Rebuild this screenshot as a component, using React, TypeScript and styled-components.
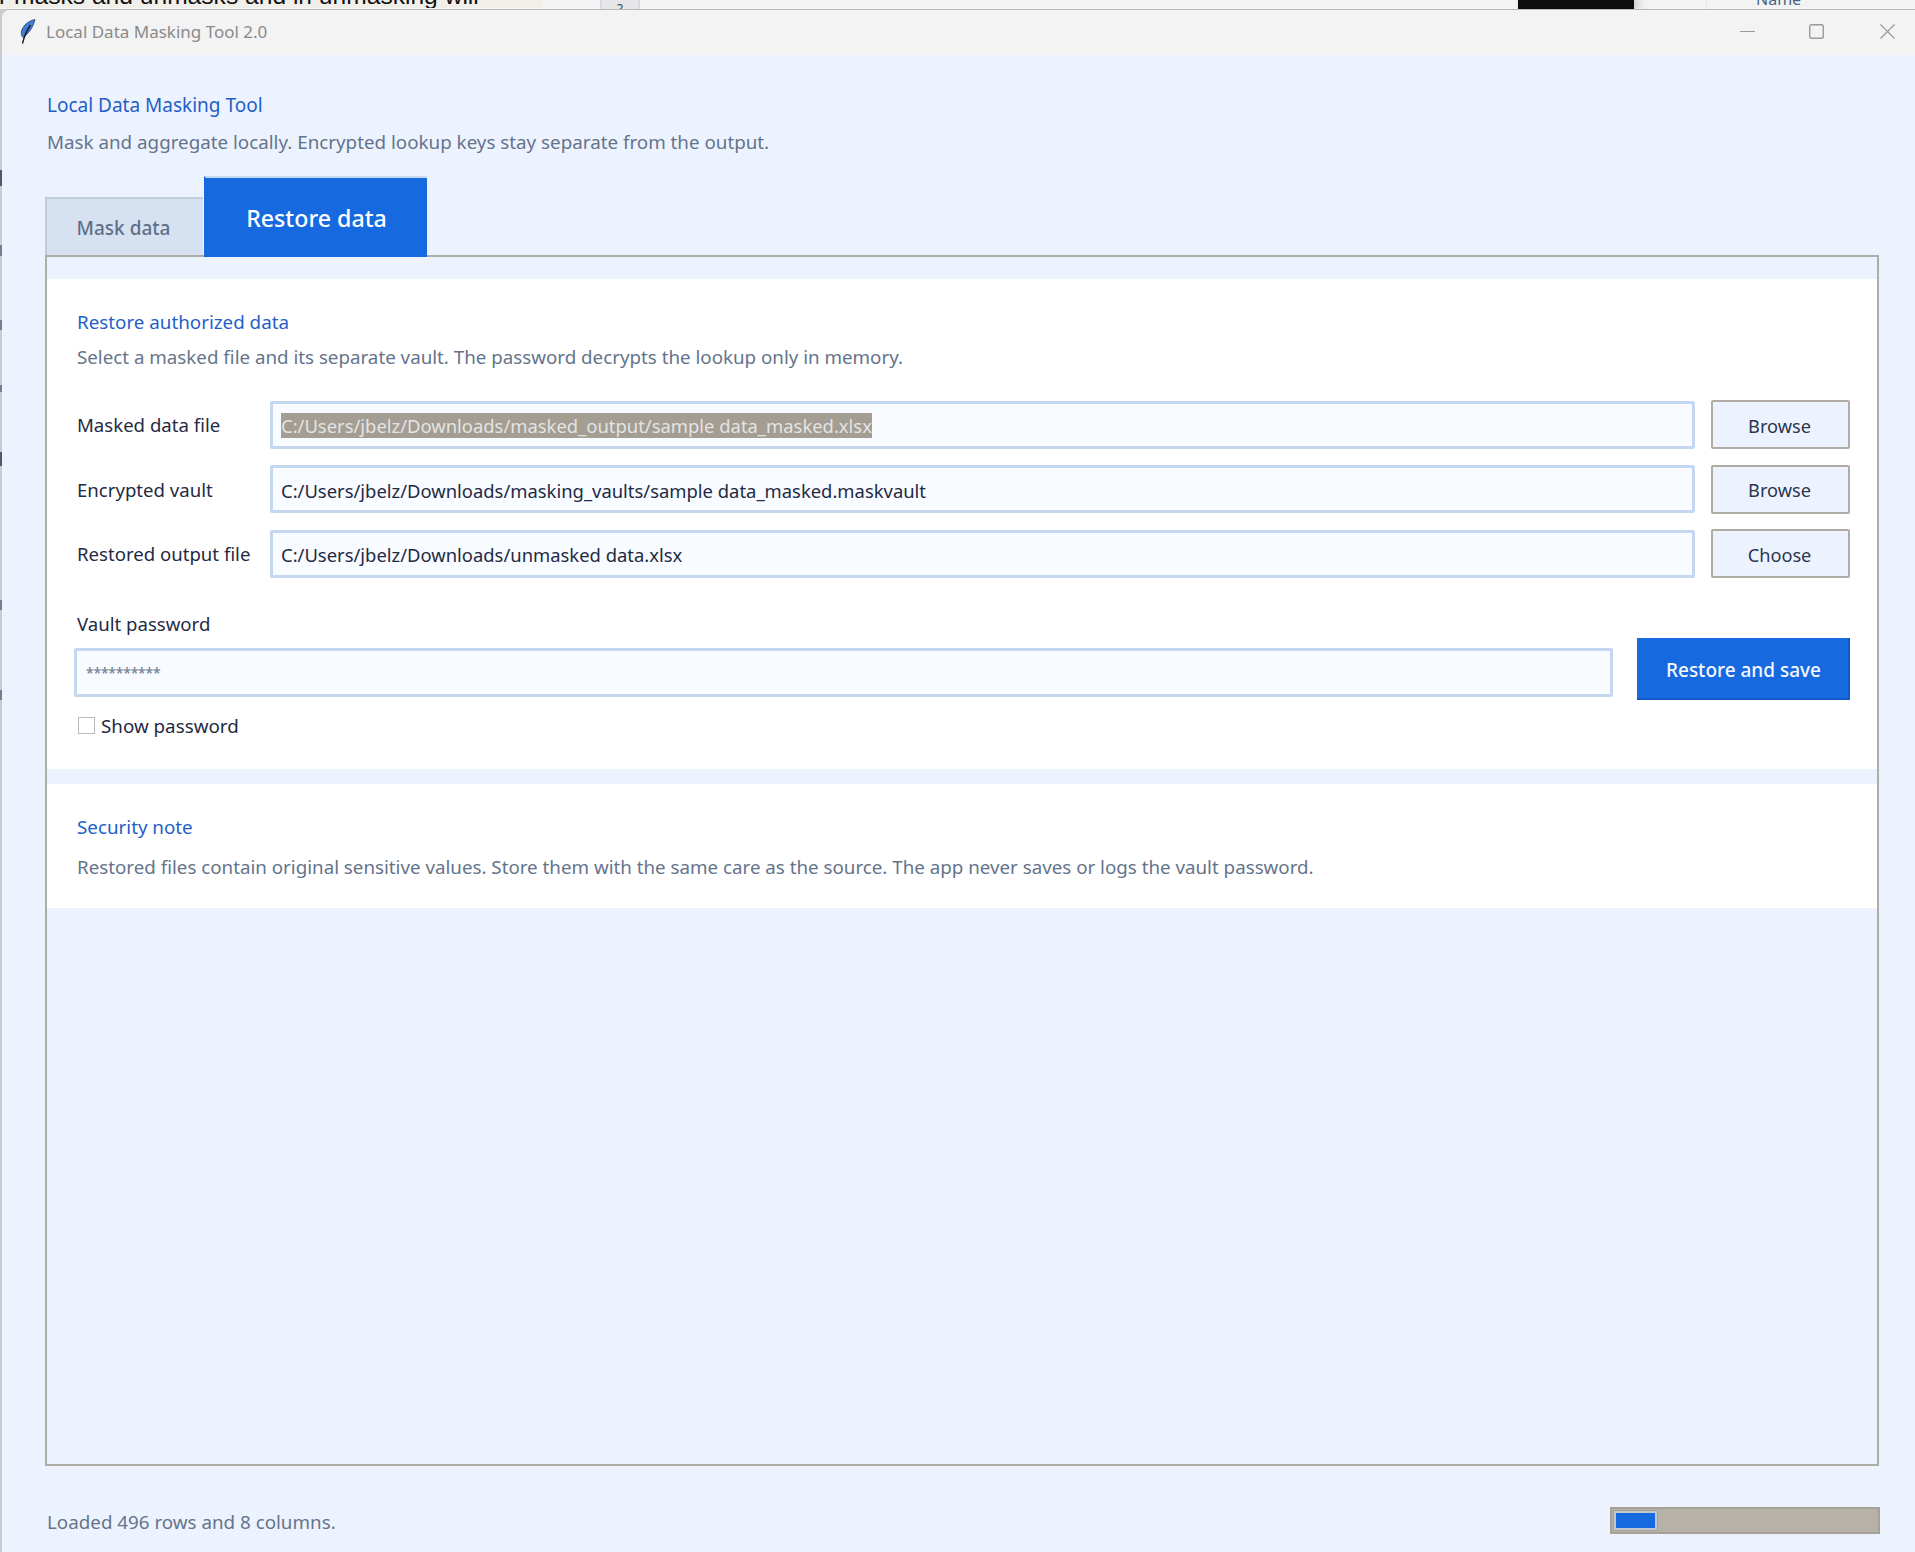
import React from 'react';
import styled, { createGlobalStyle } from 'styled-components';

const GlobalStyle = createGlobalStyle`
  html, body {
    margin: 0;
    padding: 0;
    background: #c9cbcf;
  }
  * {
    box-sizing: border-box;
  }
  body {
    font-family: 'Noto Sans', 'Open Sans', sans-serif;
  }
`;

const Page = styled.div`
  width: 1915px;
  height: 1552px;
  overflow: hidden;
  background: linear-gradient(
    to bottom,
    #c9cbcf 0 170px,
    #555a62 170px 186px,
    #c9cbcf 186px 245px,
    #7a7f86 245px 256px,
    #c9cbcf 256px 320px,
    #7a7f86 320px 330px,
    #c9cbcf 330px 385px,
    #7a7f86 385px 392px,
    #c9cbcf 392px 452px,
    #555a62 452px 466px,
    #c9cbcf 466px 600px,
    #7a7f86 600px 610px,
    #c9cbcf 610px 690px,
    #7a7f86 690px 700px,
    #c9cbcf 700px
  );
`;

const Backdrop = styled.div`
  display: flex;
  height: 9px;
  overflow: hidden;
  background: #f3f3f3;
`;

const BackdropDoc = styled.div`
  width: 543px;
  height: 24px;
  margin-top: -16px;
  background: #f0efea;
  color: #111;
  font-family: 'Liberation Sans', sans-serif;
  font-size: 24.6px;
  line-height: 24px;
  white-space: nowrap;
  text-indent: -1px;
  overflow: hidden;
`;

const BackdropGap = styled.div<{ $width: number }>`
  width: ${(p) => p.$width}px;
`;

const BackdropCell = styled.div`
  width: 40px;
  padding-top: 2px;
  background: #e6e6e8;
  border-left: 2px solid #d8d8e2;
  border-right: 2px solid #d8d8e2;
  color: #555;
  font-size: 14px;
  line-height: 14px;
  text-align: center;
`;

const BackdropBlack = styled.div`
  width: 116px;
  background: #0c0c0c;
  box-shadow: 4px 0 10px rgba(0, 0, 0, 0.25);
`;

const BackdropName = styled.div`
  height: 18px;
  margin-top: -9px;
  margin-left: 72px;
  padding-left: 49px;
  border-left: 1px solid #e6e6e6;
  color: #4a6488;
  font-size: 16px;
  line-height: 16px;
`;

const Window = styled.div`
  display: flex;
  flex-direction: column;
  height: 1543px;
  margin-left: 2px;
  background: #edf3fe;
  border-top: 1px solid #b9b9b9;
  border-top-left-radius: 8px;
  overflow: hidden;
`;

const TitleBar = styled.div`
  display: flex;
  align-items: center;
  flex: none;
  height: 45px;
  padding: 0 0 2px 15px;
  background: #f3f3f3;
  color: #8a8a8a;
  font-size: 17px;
`;

const WindowTitle = styled.span`
  margin-left: 9px;
`;

const WindowControls = styled.div`
  display: flex;
  align-items: center;
  gap: 54px;
  margin-left: auto;
  padding-right: 20px;
`;

const CloseSlot = styled.span`
  display: flex;
  margin-left: 2px;
`;

const Main = styled.div`
  display: flex;
  flex-direction: column;
  flex: 1;
  padding: 0 36px 0 43px;
`;

const AppTitle = styled.div`
  margin: 38px 0 0 2px;
  color: #1f5fc8;
  font-size: 19px;
  line-height: 24px;
`;

const AppSubtitle = styled.div`
  margin: 13px 0 0 2px;
  color: #64748b;
  font-size: 18.8px;
  line-height: 24px;
`;

const TabStrip = styled.div`
  display: flex;
  align-items: flex-end;
  gap: 1px;
  height: 81px;
  margin-top: 22px;
  position: relative;
  z-index: 1;
`;

const Tab = styled.div<{ $active?: boolean }>`
  display: flex;
  align-items: center;
  justify-content: center;
  width: ${(p) => (p.$active ? '223px' : '158px')};
  height: ${(p) => (p.$active ? '81px' : '58px')};
  margin-bottom: ${(p) => (p.$active ? '0' : '2px')};
  padding: ${(p) => (p.$active ? '0' : '2px 3px 0 0')};
  background: ${(p) => (p.$active ? '#1769e0' : '#d6e2f1')};
  border-top: 2px solid ${(p) => (p.$active ? '#c7d9f3' : '#c2cdda')};
  border-left: 2px solid ${(p) => (p.$active ? '#1769e0' : '#c2cdda')};
  color: ${(p) => (p.$active ? '#ffffff' : '#5f6f86')};
  font-size: ${(p) => (p.$active ? '23.2px' : '19px')};
  font-weight: 500;
`;

const Frame = styled.div`
  display: flex;
  flex-direction: column;
  gap: 15px;
  height: 1211px;
  margin-top: -2px;
  padding-top: 22px;
  border: 2px solid #aeada8;
`;

const Card = styled.section<{ $bottom: number }>`
  padding: 31px 27px ${(p) => p.$bottom}px 30px;
  background: #ffffff;
`;

const CardTitle = styled.div`
  color: #1f5fc8;
  font-size: 18.8px;
  line-height: 24px;
`;

const CardText = styled.div<{ $top: number }>`
  margin-top: ${(p) => p.$top}px;
  color: #64748b;
  font-size: 18.75px;
  line-height: 24px;
`;

const FileRows = styled.div`
  display: flex;
  flex-direction: column;
  gap: 15.5px;
  margin-top: 31px;
`;

const FileRow = styled.div`
  display: grid;
  grid-template-columns: 177px 1fr 139px;
  column-gap: 16px;
  align-items: center;
  height: 49px;
`;

const FieldLabel = styled.div<{ $top?: number }>`
  margin-top: ${(p) => p.$top ?? 0}px;
  padding-top: 1px;
  color: #1f2a44;
  font-size: 18.6px;
  line-height: 24px;
`;

const Field = styled.div`
  display: flex;
  align-items: center;
  height: 48px;
  padding: 2px 8px 0;
  background: #f8fbff;
  border: 3px solid #c5d6f0;
  border-radius: 2px;
  color: #1f2a44;
  font-size: 18.42px;
  white-space: nowrap;
`;

const Selected = styled.span`
  background: #a39d93;
  color: #e4e4e2;
  line-height: 25px;
`;

const Browse = styled.div`
  display: flex;
  align-items: center;
  justify-content: center;
  height: 49px;
  padding: 2px 2px 0 0;
  background: #edf3fe;
  border: 2px solid #b0aca3;
  border-radius: 2px;
  color: #2b3550;
  font-size: 18.2px;
`;

const PasswordRow = styled.div`
  display: flex;
  align-items: flex-start;
  gap: 24px;
  margin: 2px 0 0 -3px;
`;

const PasswordField = styled(Field)`
  flex: 1;
  height: 49px;
  margin-top: 10px;
  padding: 0 8px 0 9px;
  color: #7a869a;
  font-size: 14px;
  font-weight: 600;
  letter-spacing: -0.2px;
`;

const PrimaryButton = styled.div`
  display: flex;
  align-items: center;
  justify-content: center;
  width: 213px;
  height: 62px;
  padding: 4px 0 0 2px;
  background: #1769e0;
  border-right: 2px solid #1259c7;
  border-bottom: 2px solid #1259c7;
  color: #f4f8ff;
  font-size: 19px;
  font-weight: 500;
`;

const CheckRow = styled.div`
  display: flex;
  align-items: center;
  gap: 6px;
  height: 24px;
  margin: 14px 0 0 1px;
  color: #1f2a44;
  font-size: 18.8px;
`;

const CheckBox = styled.span`
  width: 17px;
  height: 17px;
  margin-top: -2px;
  background: #fff;
  border: 1px solid #b9b9b9;
`;

const Footer = styled.div`
  display: flex;
  align-items: center;
  justify-content: space-between;
  height: 27px;
  margin: 41px -1px 0 2px;
  color: #64748b;
  font-size: 18.8px;
`;

const StatusText = styled.span`
  padding-top: 2px;
`;

const Progress = styled.div`
  width: 270px;
  height: 27px;
  padding: 2px;
  background: #b7b2a7;
  border: 2px solid #a7a298;
`;

const ProgressFill = styled.div`
  width: 43px;
  height: 19px;
  background: #1769e0;
  border: 2px solid #c2c8d2;
  outline: 1px solid #a7a298;
`;

const Feather = () => (
  <svg width="20" height="26" viewBox="0 0 20 26" aria-hidden="true">
    <path
      d="M18 0.5 C13 1.5 6.5 5 4.5 12 C4 15 4.5 17 6 18.5 C11 15 16 9 18 0.5 Z"
      fill="#3f7fd6"
      stroke="#1d3f78"
      strokeWidth="0.8"
    />
    <path d="M13.5 6 C10 11 7.5 16 5.5 24.5" fill="none" stroke="#1a1a1a" strokeWidth="1.4" />
  </svg>
);

const MinimizeIcon = () => (
  <svg width="15" height="15" viewBox="0 0 15 15" aria-hidden="true">
    <path d="M0 7.5 H15" stroke="#9a9a9a" strokeWidth="1" />
  </svg>
);

const MaximizeIcon = () => (
  <svg width="15" height="15" viewBox="0 0 15 15" aria-hidden="true">
    <rect x="0.7" y="0.7" width="13.6" height="13.6" rx="2" fill="none" stroke="#9a9a9a" strokeWidth="1.4" />
  </svg>
);

const CloseIcon = () => (
  <svg width="15" height="15" viewBox="0 0 15 15" aria-hidden="true">
    <path d="M0.5 0.5 L14.5 14.5 M14.5 0.5 L0.5 14.5" stroke="#9a9a9a" strokeWidth="1.2" />
  </svg>
);

const fileRows = [
  { label: 'Masked data file', path: 'C:/Users/jbelz/Downloads/masked_output/sample data_masked.xlsx', action: 'Browse', selected: true },
  { label: 'Encrypted vault', path: 'C:/Users/jbelz/Downloads/masking_vaults/sample data_masked.maskvault', action: 'Browse' },
  { label: 'Restored output file', path: 'C:/Users/jbelz/Downloads/unmasked data.xlsx', action: 'Choose' },
];

export default function App() {
  return (
    <Page>
      <GlobalStyle />
      <Backdrop>
        <BackdropDoc>r masks and unmasks and in unmasking will</BackdropDoc>
        <BackdropGap $width={57} />
        <BackdropCell>?</BackdropCell>
        <BackdropGap $width={878} />
        <BackdropBlack />
        <BackdropName>Name</BackdropName>
      </Backdrop>
      <Window>
        <TitleBar>
          <Feather />
          <WindowTitle>Local Data Masking Tool 2.0</WindowTitle>
          <WindowControls>
            <MinimizeIcon />
            <MaximizeIcon />
            <CloseSlot>
              <CloseIcon />
            </CloseSlot>
          </WindowControls>
        </TitleBar>
        <Main>
          <AppTitle>Local Data Masking Tool</AppTitle>
          <AppSubtitle>Mask and aggregate locally. Encrypted lookup keys stay separate from the output.</AppSubtitle>
          <TabStrip>
            <Tab>Mask data</Tab>
            <Tab $active>Restore data</Tab>
          </TabStrip>
          <Frame>
            <Card $bottom={31}>
              <CardTitle>Restore authorized data</CardTitle>
              <CardText $top={11}>
                Select a masked file and its separate vault. The password decrypts the lookup only in memory.
              </CardText>
              <FileRows>
                {fileRows.map((row) => (
                  <FileRow key={row.label}>
                    <FieldLabel>{row.label}</FieldLabel>
                    <Field>{row.selected ? <Selected>{row.path}</Selected> : row.path}</Field>
                    <Browse>{row.action}</Browse>
                  </FileRow>
                ))}
              </FileRows>
              <FieldLabel $top={33}>Vault password</FieldLabel>
              <PasswordRow>
                <PasswordField>**********</PasswordField>
                <PrimaryButton>Restore and save</PrimaryButton>
              </PasswordRow>
              <CheckRow>
                <CheckBox />
                Show password
              </CheckRow>
            </Card>
            <Card $bottom={29}>
              <CardTitle>Security note</CardTitle>
              <CardText $top={16}>
                Restored files contain original sensitive values. Store them with the same care as the source. The app never saves or logs the vault password.
              </CardText>
            </Card>
          </Frame>
          <Footer>
            <StatusText>Loaded 496 rows and 8 columns.</StatusText>
            <Progress>
              <ProgressFill />
            </Progress>
          </Footer>
        </Main>
      </Window>
    </Page>
  );
}
